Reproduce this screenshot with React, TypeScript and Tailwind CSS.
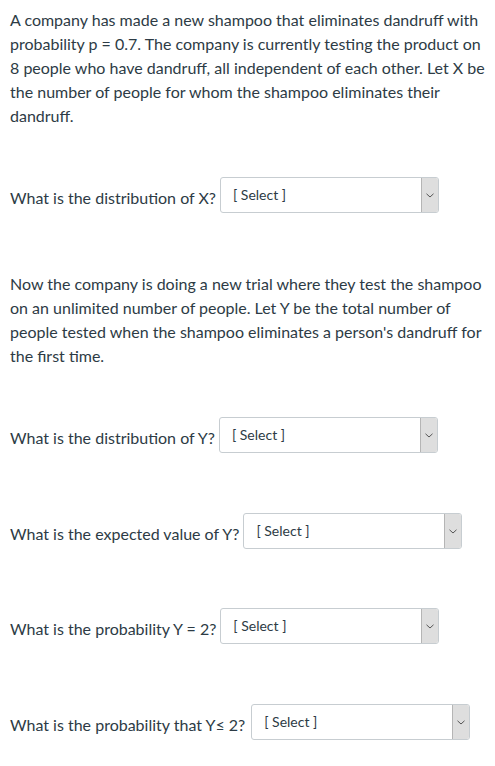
// Quiz question page - shampoo probability questions
function FakeSelect() {
  return (
    <div className="flex h-[36px] w-[219px] shrink-0 overflow-hidden rounded-[3px] border border-[#c7cdd1] bg-white">
      <div className="flex flex-1 items-center pl-[12px] text-[14px] leading-[20px] text-[#2d3b45]">
        [ Select ]
      </div>
      <div className="flex w-[17px] items-center justify-center border-l border-[#b5b5b5] bg-[#dedede]">
        <svg width="8" height="5" viewBox="0 0 8 5" fill="none">
          <path d="M0.5 0.8 L4 4 L7.5 0.8" stroke="#555" strokeWidth="1" />
        </svg>
      </div>
    </div>
  );
}

function QuestionRow({ label, className }: { label: string; className: string }) {
  return (
    <div className={`flex items-start ${className}`}>
      <span className="mt-[9px] leading-[24px]">{label}</span>
      <FakeSelect />
    </div>
  );
}

export default function App() {
  return (
    <div
      className="min-h-[766px] bg-white px-[10px] pt-[8px] text-[16px] leading-[24px] text-[#2d3b45]"
      style={{ fontFamily: "Lato, 'Liberation Sans', sans-serif" }}
    >
      <p className="w-[477px]">
        A company has made a new shampoo that eliminates dandruff with
        probability p = 0.7. The company is currently testing the product on 8
        people who have dandruff, all independent of each other. Let X be the
        number of people for whom the shampoo eliminates their dandruff.
      </p>

      <QuestionRow label="What is the distribution of X?" className="mt-[49px] gap-[4px]" />

      <p className="mt-[59px] w-[477px]">
        Now the company is doing a new trial where they test the shampoo on an
        unlimited number of people. Let Y be the total number of people tested
        when the shampoo eliminates a person's dandruff for the first time.
      </p>

      <QuestionRow label="What is the distribution of Y?" className="mt-[49px] gap-[4px]" />
      <QuestionRow label="What is the expected value of Y?" className="mt-[60px] gap-[4px]" />
      <QuestionRow label="What is the probability Y = 2?" className="mt-[59px] gap-[4px]" />
      <QuestionRow label="What is the probability that Y≤ 2?" className="mt-[60px] gap-[6px]" />
    </div>
  );
}
